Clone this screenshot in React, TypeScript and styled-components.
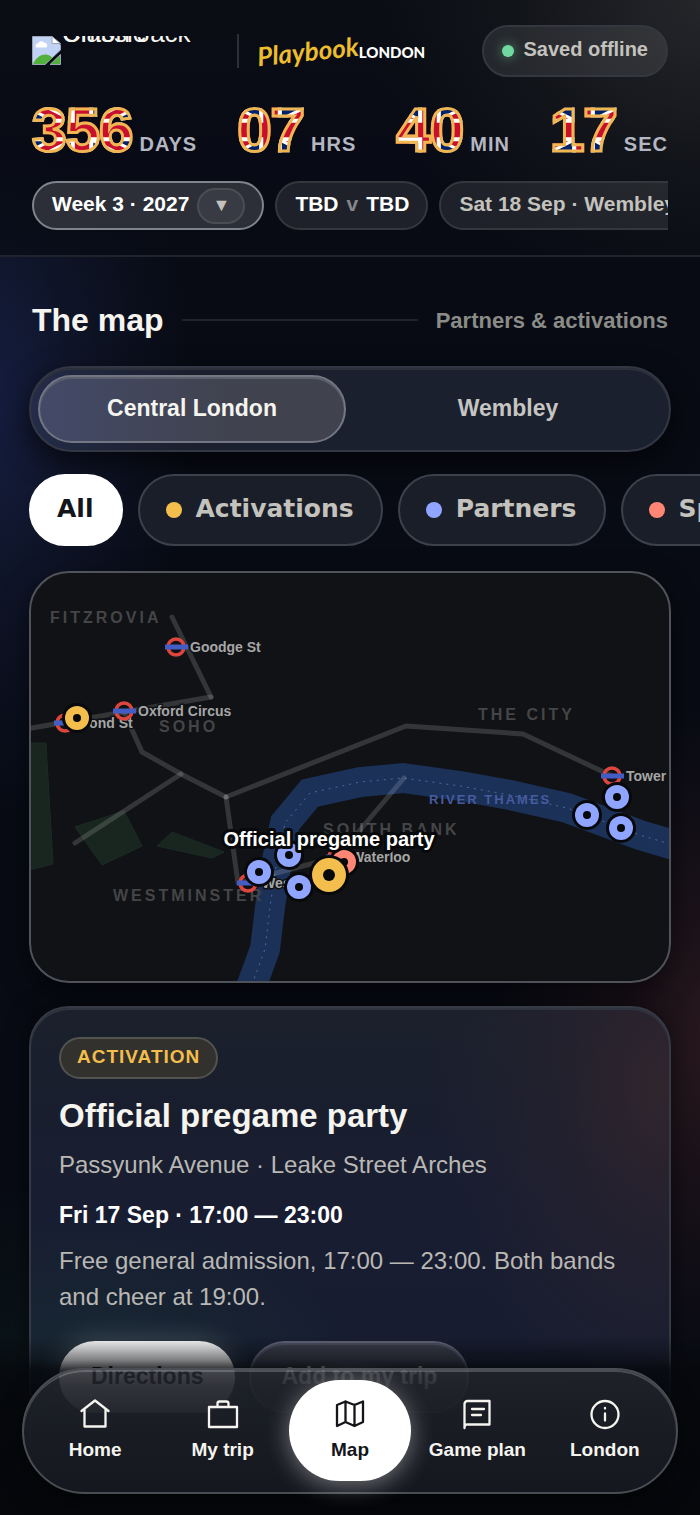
import React, { useState } from "react";
import styled, { createGlobalStyle, css } from "styled-components";

const GlobalStyle = createGlobalStyle`
  *, *::before, *::after { box-sizing: border-box; }
  body {
    margin: 0;
    background: #070a12;
    color: #f5f4ef;
    font-family: "Liberation Sans", Arial, sans-serif;
  }
  button { font: inherit; color: inherit; border: 0; background: none; padding: 0; cursor: pointer; }
  h1, h2, p { margin: 0; }
`;

const UNION_JACK =
  "url(\"data:image/svg+xml,%3Csvg xmlns='http://www.w3.org/2000/svg' viewBox='0 0 60 30' width='60' height='30'%3E%3Crect width='60' height='30' fill='%23012169'/%3E%3Cpath d='M0 0L60 30M60 0L0 30' stroke='%23fff' stroke-width='6'/%3E%3Cpath d='M0 0L60 30M60 0L0 30' stroke='%23c8102e' stroke-width='3'/%3E%3Cpath d='M30 0V30M0 15H60' stroke='%23fff' stroke-width='11'/%3E%3Cpath d='M30 0V30M0 15H60' stroke='%23c8102e' stroke-width='7'/%3E%3C/svg%3E\")";

const Screen = styled.div`
  position: relative;
  display: flex;
  flex-direction: column;
  height: 100vh;
  overflow: hidden;
  background:
    radial-gradient(ellipse 210px 420px at -20px 400px, #161e42 0%, rgba(20, 28, 56, 0.55) 45%, transparent 100%),
    radial-gradient(ellipse 240px 340px at 730px 1040px, #2a191e 0%, rgba(38, 22, 28, 0.55) 45%, transparent 100%),
    radial-gradient(ellipse 260px 160px at 20px 1350px, #0a1418 0%, transparent 100%),
    #080b14;
`;

const Header = styled.header`
  display: flex;
  flex-direction: column;
  flex: none;
  padding: 25px 32px;
  border-bottom: 2px solid #20232c;
  background:
    radial-gradient(ellipse 330px 300px at 100% 0, #24262a 0%, rgba(22, 24, 28, 0.7) 55%, transparent 100%),
    linear-gradient(180deg, #0a0d14 0%, #080b15 60%, rgba(8, 11, 20, 0.7) 100%);
`;

const BrandRow = styled.div`
  display: flex;
  align-items: center;
  height: 52px;
`;

const MissingImage = styled.span`
  display: flex;
  gap: 1px;
  width: 188px;
  height: 30px;
  overflow: hidden;
`;

const AltText = styled.span`
  width: 140px;
  margin-top: -3px;
  font-size: 26px;
  line-height: 0;
  white-space: normal;
`;

const BrandDivider = styled.span`
  width: 2px;
  height: 34px;
  margin: 0 18px 0 17px;
  background: #2d3038;
`;

const Wordmark = styled.a`
  display: flex;
  align-items: center;
  flex: 1;
  color: #fff;
  text-decoration: none;
`;

const Script = styled.span`
  color: #edbd2e;
  font: italic 700 26px/34px Lato, sans-serif;
  transform: rotate(-6deg);
`;

const City = styled.span`
  padding-top: 2px;
  font: 900 15px/20px Lato, sans-serif;
`;

const pill = css`
  display: flex;
  align-items: center;
  flex: none;
  border: 2px solid #34373d;
  background: rgba(255, 255, 255, 0.09);
  font-weight: 700;
  white-space: nowrap;
`;

const Status = styled.div`
  ${pill}
  gap: 10px;
  height: 52px;
  padding: 0 18px 4px;
  border-radius: 26px;
  color: #c3c2bd;
  font-size: 20px;
`;

const StatusDot = styled.span`
  width: 12px;
  height: 12px;
  margin-top: 4px;
  border-radius: 50%;
  background: #6fd9a0;
  box-shadow: 0 0 12px rgba(111, 217, 160, 0.6);
`;

const Countdown = styled.div`
  display: flex;
  justify-content: space-between;
  height: 72px;
  margin: 16px 0;
`;

const Unit = styled.div`
  display: flex;
  align-items: baseline;
  gap: 7px;
  color: #b4b7c2;
  font-size: 20px;
  font-weight: 700;
  line-height: 74px;
  letter-spacing: 1px;
`;

const Digits = styled.span`
  display: block;
  margin-top: 6px;
  background: ${UNION_JACK} center / cover;
  background-clip: text;
  -webkit-background-clip: text;
  color: transparent;
  -webkit-text-stroke: 3px #efb651;
  font-size: 62px;
  line-height: 62px;
  letter-spacing: -1px;
`;

const MatchRow = styled.div`
  display: flex;
  gap: 11px;
  overflow: hidden;
`;

const MatchPill = styled.div<{ $tone?: "bright" | "muted" }>`
  ${pill}
  gap: 8px;
  height: 49px;
  padding: 0 17px 4px 18px;
  border-radius: 25px;
  font-size: 21px;
  color: ${(p) => (p.$tone === "muted" ? "#c3c2bd" : "#fff")};
  ${(p) =>
    p.$tone === "bright" &&
    css`
      border-color: #7f838c;
      background: #2c2f38;
    `}
`;

const Versus = styled.span`
  color: #85868a;
`;

const WeekToggle = styled.button`
  width: 48px;
  height: 36px;
  margin-top: 4px;
  border: 2px solid #4a4d54;
  border-radius: 18px;
  background: #383b43;
  color: #c3c2bd;
  font-size: 18px;
`;

const Main = styled.main`
  display: flex;
  flex-direction: column;
  flex: 1;
  min-height: 0;
  padding: 42px 29px 0;
  overflow-y: auto;
  scrollbar-width: none;
`;

const SectionHead = styled.div`
  display: flex;
  align-items: center;
  flex: none;
  gap: 18px;
  height: 42px;
  margin: 0 3px 25px;
  &::before {
    content: "";
    order: 1;
    flex: 1;
    height: 2px;
    background: #20232b;
  }
`;

const SectionTitle = styled.h1`
  font-size: 32px;
  line-height: 42px;
`;

const SectionNote = styled.p`
  order: 2;
  padding-top: 2px;
  color: #8b8c87;
  font-size: 22px;
  font-weight: 700;
`;

const Segments = styled.div`
  display: grid;
  grid-template-columns: 1fr 1fr;
  flex: none;
  gap: 8px;
  height: 86px;
  padding: 7px;
  border: 2px solid #333743;
  border-radius: 43px;
  background: rgba(140, 155, 200, 0.15);
  box-shadow: inset 0 2px 0 #2c303b, 0 10px 28px rgba(0, 0, 0, 0.6);
`;

const Segment = styled.button<{ $active: boolean }>`
  padding-bottom: 1px;
  border-radius: 35px;
  color: #c6c5c1;
  font-size: 23px;
  font-weight: 700;
  ${(p) =>
    p.$active &&
    css`
      border: 2px solid #737784;
      background: linear-gradient(90deg, #434a68, #40434f 60%, #40434d);
      box-shadow: inset 0 2px 0 #5b5f6c;
      color: #f5f4ef;
    `}
`;

const Filters = styled.div`
  display: flex;
  flex: none;
  gap: 15px;
  margin: 22px -29px 25px 0;
  overflow: hidden;
`;

const Filter = styled.button<{ $active: boolean }>`
  display: flex;
  align-items: center;
  flex: none;
  gap: 14px;
  height: 72px;
  padding: 0 27px 4px 26px;
  border: 2px solid ${(p) => (p.$active ? "#fff" : "#3d414b")};
  border-radius: 36px;
  background: ${(p) => (p.$active ? "#fff" : "#1a1e29")};
  color: ${(p) => (p.$active ? "#14151a" : "#c3c2bd")};
  font: 700 25px "DejaVu Sans", sans-serif;
`;

const FilterDot = styled.span<{ $color: string }>`
  width: 16px;
  height: 16px;
  margin-top: 4px;
  border-radius: 50%;
  background: ${(p) => p.$color};
`;

const MapFrame = styled.section`
  flex: none;
  overflow: hidden;
  border: 2px solid #50535a;
  border-radius: 40px;
  background: #101215;
  box-shadow: 0 10px 28px rgba(0, 0, 0, 0.5);
  svg { display: block; width: 100%; height: auto; }
`;

const Card = styled.article`
  display: flex;
  flex-direction: column;
  align-items: flex-start;
  flex: none;
  margin-top: 23px;
  padding: 29px 28px 130px;
  border: 2px solid #363a45;
  border-radius: 40px;
  background:
    radial-gradient(ellipse 230px 330px at 100% 80px, #30252d 0%, rgba(40, 34, 46, 0.6) 50%, transparent 100%),
    radial-gradient(ellipse 260px 160px at 60px 360px, #182833 0%, transparent 100%),
    linear-gradient(180deg, #1b202c 0%, #181d31 35%, #171d30 75%, #181e2c 100%);
  box-shadow: inset 0 2px 0 #30343f, 0 0 24px rgba(0, 0, 0, 0.5);
`;

const Tag = styled.span`
  height: 42px;
  padding: 0 16px;
  border: 2px solid #52534f;
  border-radius: 21px;
  background: #32312e;
  color: #f3be4c;
  font-size: 19px;
  font-weight: 700;
  line-height: 36px;
  letter-spacing: 1px;
`;

const CardTitle = styled.h2`
  margin-top: 16px;
  font-size: 33px;
  line-height: 42px;
`;

const Venue = styled.p`
  margin-top: 12px;
  color: #b9b8b4;
  font-size: 24px;
  line-height: 32px;
`;

const When = styled.p`
  margin-top: 18px;
  color: #fff;
  font-size: 23px;
  font-weight: 700;
  line-height: 32px;
`;

const Details = styled.p`
  margin-top: 12px;
  color: #b9b8b4;
  font-size: 24px;
  line-height: 36px;
`;

const Actions = styled.div`
  display: flex;
  gap: 14px;
  margin-top: 26px;
`;

const Action = styled.button<{ $primary?: boolean }>`
  height: 72px;
  padding: 0 30px 2px;
  border: 2px solid ${(p) => (p.$primary ? "#fff" : "#62667a")};
  border-radius: 36px;
  background: ${(p) => (p.$primary ? "#fff" : "#3b3e4b")};
  color: ${(p) => (p.$primary ? "#14151a" : "#f5f4ef")};
  font-size: 23px;
  font-weight: 700;
  box-shadow: ${(p) => (p.$primary ? "0 0 28px rgba(255, 255, 255, 0.2)" : "inset 0 2px 0 #4d5161")};
`;

const Dock = styled.div`
  position: absolute;
  inset: auto 0 0;
  padding: 32px 22px 21px;
  background: linear-gradient(
    180deg,
    transparent 0,
    rgba(6, 8, 12, 0.5) 24px,
    rgba(6, 8, 12, 0.82) 34px,
    rgba(6, 8, 12, 0.9) 50px,
    rgba(6, 8, 13, 0.97) 84px,
    #05070b 100%
  );
`;

const Nav = styled.nav`
  display: grid;
  grid-template-columns: repeat(5, 1fr);
  gap: 5px;
  height: 126px;
  padding: 10px 10px 11px;
  border: 2px solid #4b4d54;
  border-radius: 63px;
  background: linear-gradient(180deg, rgba(190, 195, 215, 0.12), rgba(150, 155, 190, 0.11));
  box-shadow: inset 0 2px 0 rgba(255, 255, 255, 0.2), 0 10px 24px rgba(0, 0, 0, 0.5);
`;

const NavItem = styled.a<{ $active?: boolean }>`
  display: flex;
  flex-direction: column;
  align-items: center;
  gap: 7px;
  padding-top: 18px;
  border-radius: 51px;
  color: #f5f4ef;
  font-size: 19px;
  font-weight: 700;
  line-height: 26px;
  text-decoration: none;
  white-space: nowrap;
  svg { flex: none; }
  ${(p) =>
    p.$active &&
    css`
      background: #fff;
      color: #14151a;
      box-shadow: 0 4px 24px rgba(255, 255, 255, 0.4);
    `}
`;

const icons: Record<string, React.ReactNode> = {
  home: <path d="M2.500 13 16 2.500 29.500 13M5.500 11V28.500h21V11" />,
  trip: <path d="M2 9h28v20H2zM10.500 9V5.500a2 2 0 0 1 2-2h7a2 2 0 0 1 2 2V9" />,
  map: <path d="M3 7v21l8.500-4 9 4 8.500-4V3.500L20.500 7l-9-3.500zM11.500 3.500V24M20.500 7v21" />,
  plan: <path d="M3.500 30V6a3 3 0 0 1 3-3h22v23.500H7a3 3 0 0 0-3.500 3.500M11 11h12M11 17h9" />,
  info: (
    <>
      <circle cx="16" cy="16.500" r="13.500" />
      <path d="M16 15.500v7M16 10v.5" />
    </>
  ),
};

function Icon({ name }: { name: string }) {
  return (
    <svg width="32" height="32" viewBox="0 0 32 32" fill="none" stroke="currentColor" strokeWidth="2.300" strokeLinecap="round" strokeLinejoin="round" aria-hidden="true">
      {icons[name]}
    </svg>
  );
}

function BrokenImageIcon() {
  return (
    <svg width="29" height="30" viewBox="0 0 29 30" aria-hidden="true">
      <path d="M.5.500H20L28.500 9V14L13 28.500H.5z" fill="#c1d3f5" stroke="#9aa4b5" />
      <path d="M20 .5V7.500H28.500z" fill="#fff" stroke="#9aa4b5" />
      <path d="M4 11.500a2.500 2.500 0 0 1 2-4 3.500 3.500 0 0 1 6-1 3 3 0 0 1 2.500 5z" fill="#fff" />
      <path d="M1 28C4 21 10 18 14 18.500c4 .5 5 2 6.500 3.500L13 28z" fill="#52b03c" />
      <path d="M28.500 18.500V28.500H18z" fill="#52b03c" stroke="#9aa4b5" />
    </svg>
  );
}

const YELLOW = "#f3be4c";
const BLUE = "#8fa5ff";
const CORAL = "#ff8675";

const areas = [
  { name: "FITZROVIA", x: 20, y: 51 },
  { name: "SOHO", x: 129, y: 160 },
  { name: "THE CITY", x: 448, y: 148 },
  { name: "SOUTH BANK", x: 293, y: 263 },
  { name: "WESTMINSTER", x: 83, y: 329 },
];

const stations = [
  { name: "Goodge St", x: 146, y: 75 },
  { name: "Bond St", x: 35, y: 151 },
  { name: "Oxford Circus", x: 94, y: 139 },
  { name: "Westminster", x: 218, y: 311 },
  { name: "Waterloo", x: 307, y: 285 },
  { name: "Tower Hill", x: 582, y: 204 },
];

const pins = [
  { x: 47, y: 146, color: YELLOW },
  { x: 587, y: 225, color: BLUE },
  { x: 557, y: 243, color: BLUE },
  { x: 591, y: 256, color: BLUE },
  { x: 259, y: 283, color: BLUE },
  { x: 229, y: 300, color: BLUE },
  { x: 269, y: 315, color: BLUE },
  { x: 314, y: 290, color: CORAL },
  { x: 299, y: 303, color: YELLOW, big: true },
];

const RIVER = "M208 445 223 410 235 377 240 335 247 288 255 251 280 221 330 210 373 206 430 214 480 223 537 236 610 263 650 275";

const MapText = styled.text<{ $kind: "area" | "river" | "station" | "pin" }>`
  font-weight: 700;
  paint-order: stroke;
  ${(p) =>
    ({
      area: css`font-size: 16px; letter-spacing: 3px; fill: #444547;`,
      river: css`font-size: 13px; letter-spacing: 2px; fill: #465ba0;`,
      station: css`font-size: 14px; fill: #a6a6a6; stroke: #101215; stroke-width: 3px;`,
      pin: css`font-size: 20px; fill: #fff; stroke: #08090b; stroke-width: 6px; stroke-linejoin: round;`,
    })[p.$kind]}
`;

function LondonMap() {
  return (
    <MapFrame aria-label="Map of Central London">
      <svg viewBox="1 1 638 408">
        <g fill="#19251f" stroke="#1c2b25">
          <path d="M-1 171H16L23 292-1 298z" />
          <path d="M45 255 94 239 112 274 72 293z" />
          <path d="M127 274 142 260 194 280 182 286z" />
        </g>
        <path d={RIVER} fill="none" stroke="#1b3158" strokeWidth="30" />
        <path d={RIVER} fill="none" stroke="#4d6a9b" strokeDasharray="2 5" />
        {areas.map((a) => (
          <MapText key={a.name} $kind="area" x={a.x} y={a.y}>{a.name}</MapText>
        ))}
        <g fill="none" stroke="#fff" strokeOpacity="0.150" strokeWidth="5" strokeLinecap="round" strokeLinejoin="round">
          <path d="M-4 157 94 140 181 125" />
          <path d="M142 45 181 125" />
          <path d="M94 140 112 180 151 202 196 225" />
          <path d="M45 271 151 202" />
          <path d="M196 225 376 154 493 162 582 204" />
          <path d="M196 225 208 311 307 285 374 206" />
        </g>
        <MapText $kind="river" x="399" y="232">RIVER THAMES</MapText>
        {stations.map((s) => (
          <g key={s.name}>
            <circle cx={s.x} cy={s.y} r="8" fill="none" stroke="#dd463f" strokeWidth="3.500" />
            <path d={`M${s.x - 11} ${s.y}h23`} stroke="#435dc4" strokeWidth="5" />
            <MapText $kind="station" x={s.x + 14} y={s.y + 5}>{s.name}</MapText>
          </g>
        ))}
        {pins.map((p) => (
          <g key={`${p.x}-${p.y}`}>
            <circle cx={p.x} cy={p.y} r={p.big ? 20 : 15} fill="#08090b" />
            <circle cx={p.x} cy={p.y} r={p.big ? 17 : 12} fill={p.color} />
            <circle cx={p.x} cy={p.y} r={p.big ? 6 : 4} fill="#08090b" />
          </g>
        ))}
        <MapText $kind="pin" x="299" y="274" textAnchor="middle">Official pregame party</MapText>
      </svg>
    </MapFrame>
  );
}

const countdown = [
  ["356", "DAYS"],
  ["07", "HRS"],
  ["40", "MIN"],
  ["17", "SEC"],
];

const filters = [
  { name: "All" },
  { name: "Activations", color: YELLOW },
  { name: "Partners", color: BLUE },
  { name: "Sports bars", color: CORAL },
];

const tabs = [
  { name: "Home", icon: "home" },
  { name: "My trip", icon: "trip" },
  { name: "Map", icon: "map" },
  { name: "Game plan", icon: "plan" },
  { name: "London", icon: "info" },
];

export default function App() {
  const [zone, setZone] = useState("Central London");
  const [filter, setFilter] = useState("All");

  return (
    <Screen>
      <GlobalStyle />
      <Header>
        <BrandRow>
          <MissingImage>
            <BrokenImageIcon />
            <AltText>Union Jack Classic</AltText>
          </MissingImage>
          <BrandDivider />
          <Wordmark href="#home">
            <Script>Playbook</Script>
            <City>LONDON</City>
          </Wordmark>
          <Status>
            <StatusDot />
            Saved offline
          </Status>
        </BrandRow>
        <Countdown>
          {countdown.map(([value, label]) => (
            <Unit key={label}>
              <Digits>{value}</Digits>
              {label}
            </Unit>
          ))}
        </Countdown>
        <MatchRow>
          <MatchPill $tone="bright">
            Week 3 · 2027
            <WeekToggle aria-label="Choose week">▼</WeekToggle>
          </MatchPill>
          <MatchPill>
            TBD <Versus>v</Versus> TBD
          </MatchPill>
          <MatchPill $tone="muted">Sat 18 Sep · Wembley</MatchPill>
        </MatchRow>
      </Header>

      <Main>
        <SectionHead>
          <SectionTitle>The map</SectionTitle>
          <SectionNote>Partners &amp; activations</SectionNote>
        </SectionHead>
        <Segments>
          {["Central London", "Wembley"].map((name) => (
            <Segment key={name} $active={zone === name} onClick={() => setZone(name)}>
              {name}
            </Segment>
          ))}
        </Segments>
        <Filters>
          {filters.map((f) => (
            <Filter key={f.name} $active={filter === f.name} onClick={() => setFilter(f.name)}>
              {f.color && <FilterDot $color={f.color} />}
              {f.name}
            </Filter>
          ))}
        </Filters>
        <LondonMap />
        <Card>
          <Tag>ACTIVATION</Tag>
          <CardTitle>Official pregame party</CardTitle>
          <Venue>Passyunk Avenue · Leake Street Arches</Venue>
          <When>Fri 17 Sep · 17:00 — 23:00</When>
          <Details>Free general admission, 17:00 — 23:00. Both bands and cheer at 19:00.</Details>
          <Actions>
            <Action $primary>Directions</Action>
            <Action>Add to my trip</Action>
          </Actions>
        </Card>
      </Main>

      <Dock>
        <Nav>
          {tabs.map((t) => (
            <NavItem key={t.name} href={`#${t.icon}`} $active={t.name === "Map"}>
              <Icon name={t.icon} />
              {t.name}
            </NavItem>
          ))}
        </Nav>
      </Dock>
    </Screen>
  );
}
